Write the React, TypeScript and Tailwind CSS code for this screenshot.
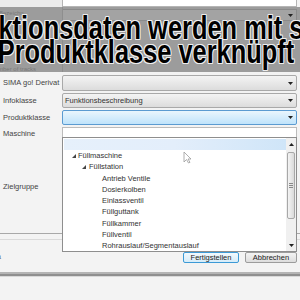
import React from 'react'

const ui = "font-['Liberation_Sans','Arial',sans-serif]"

function Arrow({ up }: { up?: boolean }) {
  return (
    <svg width="5" height="3" viewBox="0 0 5 3" className="shrink-0">
      <path d={up ? 'M0 3 L2.5 0 L5 3 Z' : 'M0 0 L5 0 L2.5 3 Z'} fill="#222" />
    </svg>
  )
}

function Combo({ text, active, h }: { text?: string; active?: boolean; h: string }) {
  return (
    <div
      className={`flex-1 mr-[3px] ${h} flex items-center justify-between pl-[2px] pr-[3px] rounded-[2px] border ${
        active
          ? 'border-[#5b9bd1] bg-gradient-to-b from-[#eaf6fd] to-[#bfe3fb]'
          : 'border-[#a9a9a9] bg-gradient-to-b from-[#f4f4f4] to-[#dcdcdc]'
      }`}
    >
      <span className="text-[7.5px] text-[#333] leading-none">{text}</span>
      <Arrow />
    </div>
  )
}

function Row({ label, children, cls }: { label: string; children: React.ReactNode; cls: string }) {
  return (
    <div className={`flex items-center ${cls}`}>
      <div className="w-[62px] pl-[3px] text-[7.5px] text-[#444] leading-none whitespace-nowrap">{label}</div>
      {children}
    </div>
  )
}

function Tri() {
  return (
    <svg width="4" height="4" viewBox="0 0 4 4" className="shrink-0">
      <path d="M4 0 L4 4 L0 4 Z" fill="#444" />
    </svg>
  )
}

const children = [
  'Antrieb Ventile',
  'Dosierkolben',
  'Einlassventil',
  'Füllguttank',
  'Füllkammer',
  'Füllventil',
  'Rohrauslauf/Segmentauslauf',
]

export default function App() {
  return (
    <div className={`relative w-[300px] h-[300px] overflow-hidden bg-[#f3f3f3] ${ui}`}>
      {/* top field */}
      <div className="flex h-[7px]">
        <div className="w-[62px] bg-[#ececec]" />
        <div className="flex-1 mr-[3px] bg-white border-b border-x border-[#b5b5b5]" />
      </div>

      {/* caption band */}
      <div className="relative h-[65px] bg-[#9c9c9c] overflow-hidden">
        <div className="absolute left-[62px] right-[3px] top-[2px] h-[12px] border border-[#8a8a8a] bg-[#a3a3a3] flex items-center justify-end pr-[3px]">
          <Arrow />
        </div>
        <div className="absolute left-[-1px] top-[2px] text-[6px] text-[#7a7a7a]">Bezeichn</div>
        <div className="absolute left-[-2px] bottom-[-1px] text-[6px] leading-[8px] text-[#7a7a7a]">mber of tracks</div>
        <div className="absolute left-[62px] top-0 bottom-0 w-px bg-[#8e8e8e]" />
        <div className="relative origin-left scale-x-[0.77] font-['Liberation_Sans','Arial',sans-serif] font-bold text-[33px] leading-[24px] text-black whitespace-nowrap pt-[9px] [text-shadow:1px_1px_0_#eee,-1px_-1px_0_#eee,1px_-1px_0_#eee,-1px_1px_0_#eee,0_1px_0_#eee,0_-1px_0_#eee,1px_0_0_#eee,-1px_0_0_#eee]">
          <div className="ml-[-2px]">ktionsdaten werden mit s</div>
          <div className="ml-[-3px]">Produktklasse verknüpft</div>
        </div>
      </div>

      <Row label="SIMA go! Derivat" cls="mt-[3px] h-[16px]">
        <Combo h="h-[16px]" />
      </Row>
      <Row label="Infoklasse" cls="mt-[2px] h-[15px]">
        <Combo h="h-[15px]" text="Funktionsbeschreibung" />
      </Row>
      <Row label="Produktklasse" cls="mt-[2px] h-[15px]">
        <Combo h="h-[15px]" active />
      </Row>
      <Row label="Maschine" cls="mt-[2px] h-[13px]">
        <div className="flex-1 mr-[3px] h-[13px] bg-white border border-[#bcbcbc]" />
      </Row>

      <div className="h-[93px] flex items-center">
        <div className="pl-[3px] text-[7.5px] text-[#444] leading-none">Zielgruppe</div>
      </div>
      <div className="h-px bg-[#a8a8a8]" />
      <div className="h-[5px]" />
      <div className="h-px bg-[#dadada]" />

      {/* buttons */}
      <div className="flex justify-end gap-[6px] mr-[3px] mt-[12px] h-[11px]">
        <div className="w-[56px] rounded-[2px] border border-[#3c9ad6] bg-gradient-to-b from-[#f2f9fd] to-[#d6ecf9] flex items-center justify-center text-[7.5px] text-[#222] leading-none">
          Fertigstellen
        </div>
        <div className="w-[52px] rounded-[2px] border border-[#9c9c9c] bg-gradient-to-b from-[#f3f3f3] to-[#dddddd] flex items-center justify-center text-[7.5px] text-[#222] leading-none">
          Abbrechen
        </div>
      </div>
      <div className="absolute left-0 top-[253px] text-[7px] text-[#555] leading-none ml-[-3px]">a</div>

      <div className="mt-[9px] h-[2px] bg-[#b4b4b4]" />
      <div className="h-[2px] bg-[#8f8f8f]" />
      <div className="h-px bg-[#d8d8d8]" />

      {/* dropdown list */}
      <div className="absolute left-[62px] top-[137px] w-[235px] h-[115px] bg-white border border-[#8e8e8e] flex">
        <div className="flex-1 pt-px">
          <div className="h-[11.25px] ml-px bg-gradient-to-r from-[#e6f0fb] via-[#e3eefb] to-[#cfe5f8]" />
          <div className="h-[11.25px] flex items-center gap-[2px] pl-[9px] text-[7.5px] text-[#333] leading-none">
            <Tri />
            <span>Füllmaschine</span>
          </div>
          <div className="h-[11.25px] flex items-center gap-[3px] pl-[19px] text-[7.5px] text-[#333] leading-none">
            <Tri />
            <span>Füllstation</span>
          </div>
          {children.map((c) => (
            <div key={c} className="h-[11.25px] flex items-center pl-[39px] text-[7.5px] text-[#333] leading-none">
              {c}
            </div>
          ))}
        </div>
        <div className="w-[10px] bg-[#f0f0f0] flex flex-col items-center py-[2px]">
          <div className="h-[8px] flex items-center">
            <Arrow up />
          </div>
          <div className="mt-[4px] w-[8px] h-[67px] rounded-[2px] border border-[#a8a8a8] bg-gradient-to-r from-[#f4f4f4] to-[#dadada] flex flex-col items-center justify-center gap-px">
            <div className="w-[4px] h-px bg-[#888]" />
            <div className="w-[4px] h-px bg-[#888]" />
            <div className="w-[4px] h-px bg-[#888]" />
          </div>
          <div className="flex-1" />
          <div className="h-[8px] flex items-center">
            <Arrow />
          </div>
        </div>
      </div>

      {/* mouse cursor */}
      <svg className="absolute left-[183px] top-[151px]" width="9" height="13" viewBox="0 0 9 13">
        <path d="M1 1 L1 11 L3.5 8.5 L5.5 12 L7 11.3 L5 8 L8 8 Z" fill="#fff" stroke="#9a9a9a" strokeWidth="0.8" />
      </svg>
    </div>
  )
}
